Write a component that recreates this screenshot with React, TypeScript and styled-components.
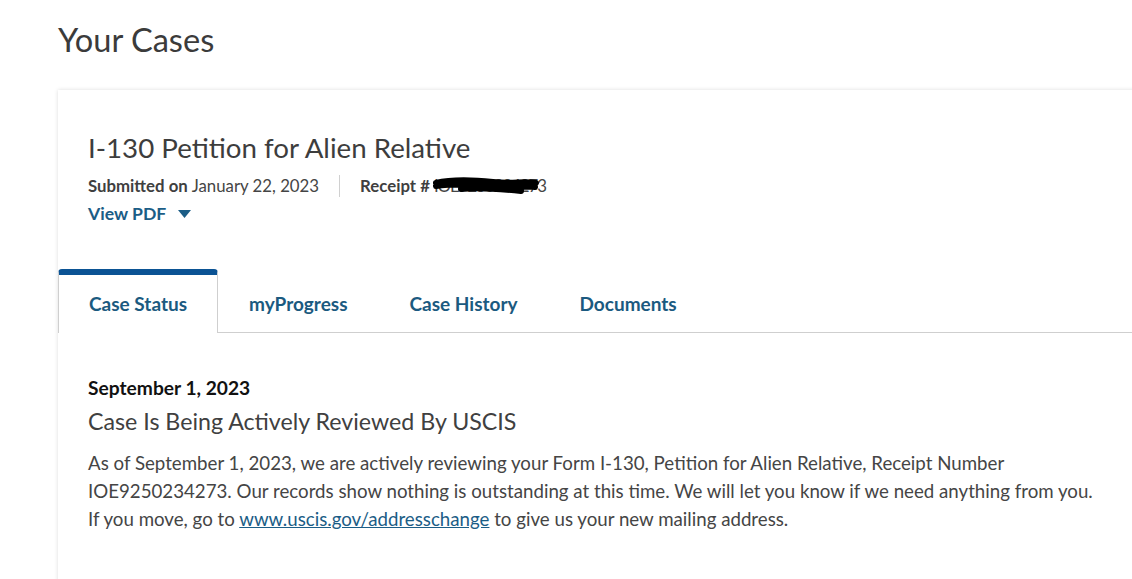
import React from "react";
import styled, { createGlobalStyle } from "styled-components";

const Global = createGlobalStyle`
  html, body { margin: 0; padding: 0; background: #fff; }
  body { font-family: Lato, "Open Sans", sans-serif; color: #454545; }
`;

const Page = styled.div`
  width: 1132px;
  height: 579px;
  overflow: hidden;
  padding-left: 58px;
  box-sizing: border-box;
`;

const PageTitle = styled.h1`
  margin: 20px 0 0;
  font-size: 32.6px;
  line-height: 40px;
  font-weight: 400;
  color: #3b3b3b;
`;

const Card = styled.section`
  margin-top: 30px;
  width: 1100px;
  min-height: 520px;
  background: #fff;
  box-shadow: 0 0 4px rgba(0, 0, 0, 0.14);
`;

const CardHeader = styled.div`
  padding: 40px 30px 0;
`;

const CaseTitle = styled.h2`
  margin: 0;
  font-size: 27.7px;
  line-height: 36px;
  font-weight: 400;
  color: #3d3d3d;
`;

const MetaRow = styled.div`
  margin-top: 8px;
  display: flex;
  align-items: center;
  font-size: 16.8px;
  line-height: 24px;
  color: #454545;
`;

const MetaItem = styled.span`
  display: inline-flex;
  align-items: center;
  gap: 4px;
`;

const MetaLabel = styled.strong`
  font-weight: 700;
  color: #3f3f3f;
`;

const Divider = styled.span`
  width: 1px;
  height: 22px;
  background: #d0d0d0;
  margin: 0 20px;
`;

const Redacted = styled.span`
  position: relative;
  display: inline-block;
  letter-spacing: -1px;
`;

const Scribble = styled.svg`
  position: absolute;
  left: -1px;
  top: 2px;
`;

const PdfButton = styled.button`
  margin-top: 2px;
  padding: 0;
  border: 0;
  background: none;
  display: inline-flex;
  align-items: center;
  gap: 12px;
  font-family: inherit;
  font-size: 17.6px;
  line-height: 28px;
  font-weight: 700;
  color: #1b5d86;
  cursor: pointer;
`;

const TabList = styled.div`
  margin-top: 41px;
  display: flex;
  border-bottom: 1px solid #cfcfcf;
`;

const Tab = styled.div<{ $active?: boolean }>`
  height: 57px;
  padding: 0 30px;
  display: flex;
  align-items: center;
  font-size: 19px;
  font-weight: 700;
  color: #1b5a80;
  border-top: 6px solid ${(p) => (p.$active ? "#0b5394" : "transparent")};
  border-left: 1px solid ${(p) => (p.$active ? "#cfcfcf" : "transparent")};
  border-right: 1px solid ${(p) => (p.$active ? "#cfcfcf" : "transparent")};
  border-radius: 4px 4px 0 0;
  background: #fff;
  margin-bottom: -1px;
  ${(p) => p.$active && "padding-bottom: 1px;"}
`;

const Content = styled.div`
  padding: 43px 30px 0;
`;

const StatusDate = styled.div`
  font-size: 19.2px;
  line-height: 24px;
  font-weight: 700;
  color: #111;
`;

const StatusTitle = styled.h3`
  margin: 5px 0 0;
  font-size: 23.2px;
  line-height: 32px;
  font-weight: 400;
  color: #404040;
`;

const StatusText = styled.p`
  margin: 12px 0 0;
  font-size: 18.7px;
  line-height: 28px;
  color: #454545;
  white-space: nowrap;
`;

const Link = styled.a`
  color: #1b5d86;
  text-decoration: underline;
`;

export default function App() {
  return (
    <Page>
      <Global />
      <PageTitle>Your Cases</PageTitle>
      <Card>
        <CardHeader>
          <CaseTitle>I-130 Petition for Alien Relative</CaseTitle>
          <MetaRow>
            <MetaItem>
              <MetaLabel>Submitted on</MetaLabel> January 22, 2023
            </MetaItem>
            <Divider />
            <MetaItem>
              <MetaLabel>Receipt #</MetaLabel>
              <Redacted>
                IOE9250234273
                <Scribble width="110" height="20" viewBox="0 0 110 20">
                  <path
                    d="M3 7 C20 3 40 4 60 6 C78 8 92 5 103 7 M3 10 C25 7 50 9 70 10 C86 11 96 10 102 11 M28 13 C48 11 68 13 88 15"
                    stroke="#000"
                    strokeWidth="6"
                    strokeLinecap="round"
                    fill="none"
                  />
                </Scribble>
              </Redacted>
            </MetaItem>
          </MetaRow>
          <PdfButton>
            View PDF
            <svg width="13" height="8" viewBox="0 0 13 8">
              <path d="M0 0 H13 L6.5 8 Z" fill="#1b5d86" />
            </svg>
          </PdfButton>
        </CardHeader>
        <TabList>
          <Tab $active>Case Status</Tab>
          <Tab>myProgress</Tab>
          <Tab>Case History</Tab>
          <Tab>Documents</Tab>
        </TabList>
        <Content>
          <StatusDate>September 1, 2023</StatusDate>
          <StatusTitle>Case Is Being Actively Reviewed By USCIS</StatusTitle>
          <StatusText>
            As of September 1, 2023, we are actively reviewing your Form I-130, Petition for Alien
            Relative, Receipt Number
            <br />
            IOE9250234273. Our records show nothing is outstanding at this time. We will let you know
            if we need anything from you.
            <br />
            If you move, go to <Link href="#">www.uscis.gov/addresschange</Link> to give us your new
            mailing address.
          </StatusText>
        </Content>
      </Card>
    </Page>
  );
}
